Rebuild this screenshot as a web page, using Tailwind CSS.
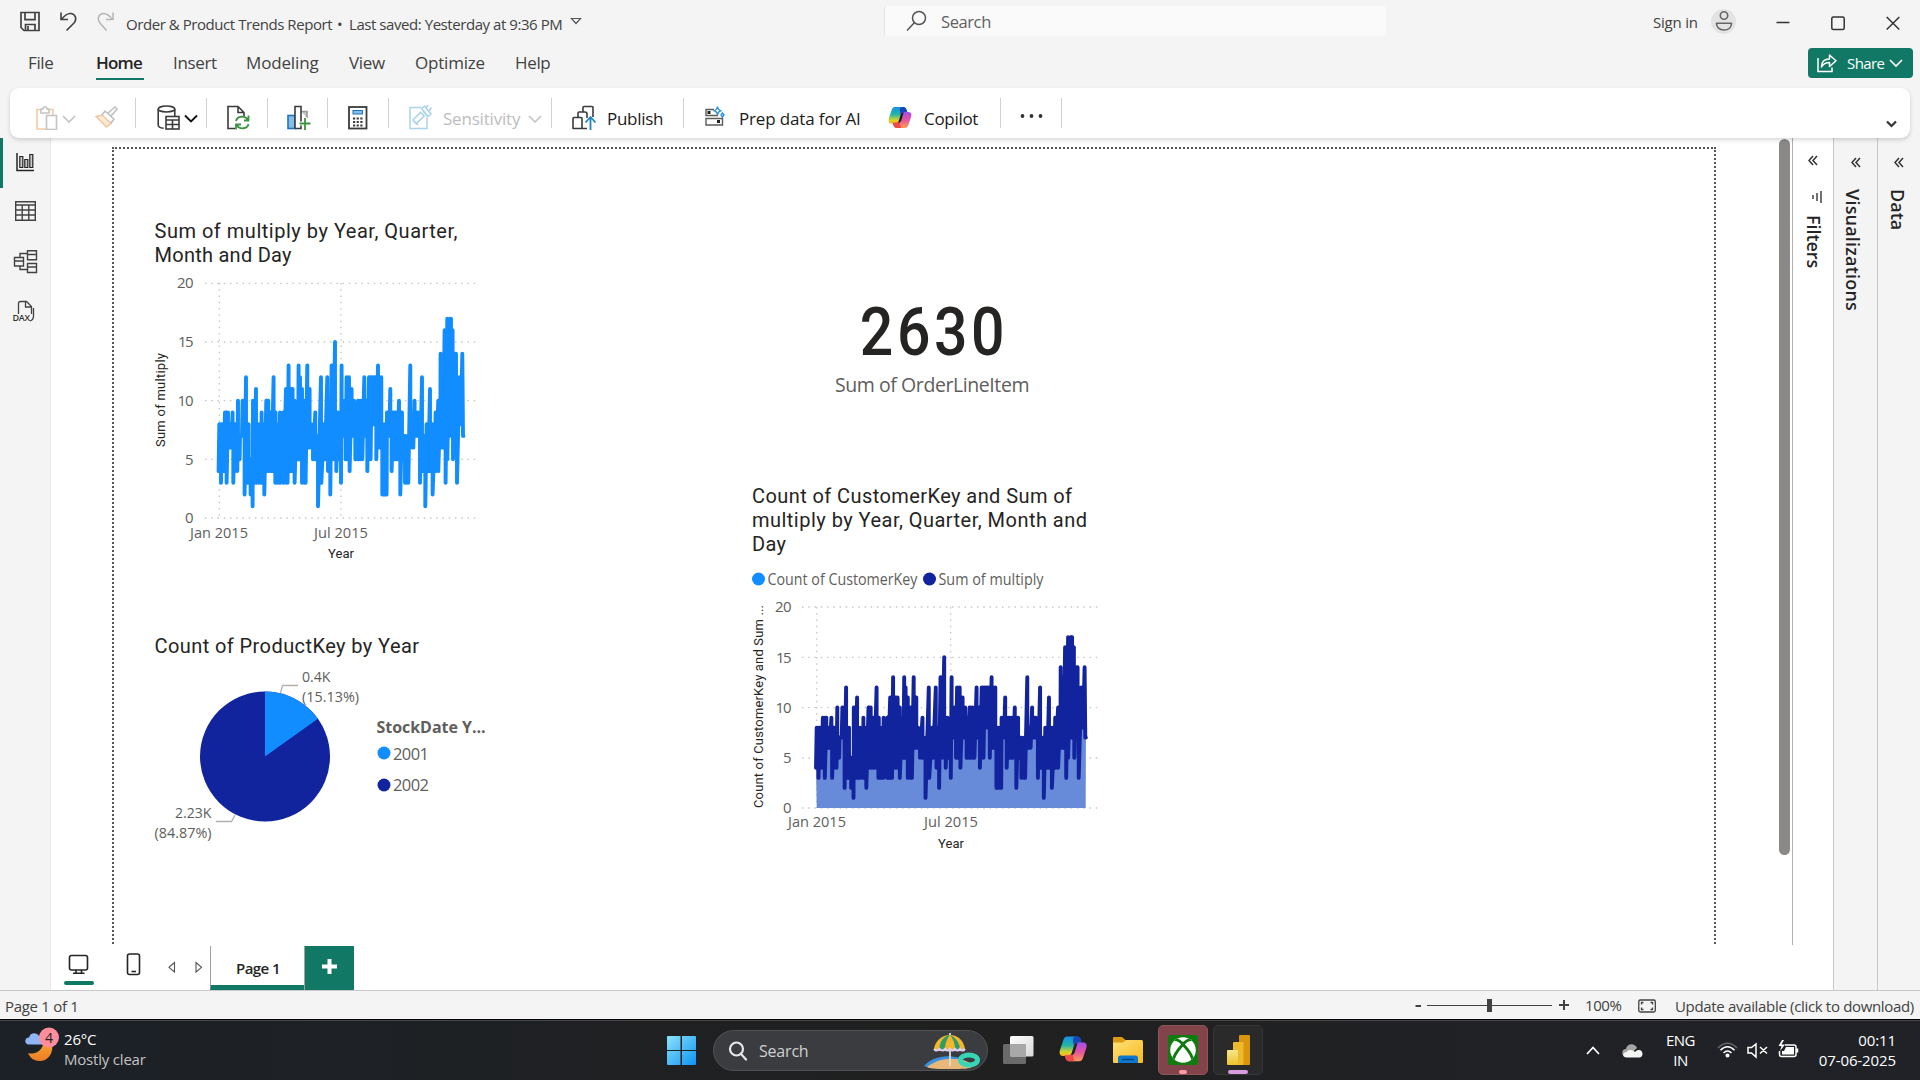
<!DOCTYPE html>
<html lang="en">
<head>
<meta charset="utf-8">
<title>Order &amp; Product Trends Report</title>
<script src="https://cdn.jsdelivr.net/npm/@tailwindcss/browser@4"></script>
</head>
<body class="w-[1920px] h-[1080px] overflow-hidden flex flex-col bg-[#f4f4f4] font-['Open_Sans','Noto_Sans',sans-serif] text-[#424242] whitespace-nowrap">

<!-- Title bar -->
<header class="h-[42px] shrink-0 flex items-start">
  <div class="w-[126px] h-[42px] pt-[11px] pl-[20px] flex">
    <svg class="w-[40px] h-[22px]" viewBox="0 0 40 22" fill="none" stroke="#424242" stroke-width="1.7"><path d="M1 1.5h18v18H4l-3-3z"/><path d="M5 1.5v7.2h10V1.5M5.5 19.500v-6h9.500v6M8 15v4"/></svg>
    <svg class="w-[37px] h-[22px]" viewBox="0 0 37 22" fill="none" stroke="#424242" stroke-width="1.6"><path d="M1 1.500v7h7M1.500 8.200C5 4 8 2 11 2.500c5 .8 6 6 3 9.500L6.500 19.500"/></svg>
    <svg class="w-[20px] h-[22px]" viewBox="0 0 20 22" fill="none" stroke="#b5b5b5" stroke-width="1.5"><path d="M16 1.500v7H9M15.500 8.200C12 4 9 2 6 2.500c-5 .8-6 6-3 9.500L9.500 19.500"/></svg>
  </div>
  <div class="w-[444px] pt-[14px] text-[15px] leading-[20px] tracking-[-0.44px] flex"><span class="w-[211px]">Order &amp; Product Trends Report</span><span class="w-[12px]">•</span><span>Last saved: Yesterday at 9:36 PM</span></div>
  <div class="w-[314px] pt-[17px]"><svg class="w-[12px] h-[9px]" viewBox="0 0 12 9" fill="none" stroke="#555" stroke-width="1.2"><path d="M1.500 1.500h9L6 6.500z"/></svg></div>
  <div class="w-[502px] h-[30px] mt-[6px] flex items-center pl-[21px] gap-[14px] bg-[#fafafa] border-l border-[#e2e2e2] rounded-[3px] text-[#616161] text-[16.500px] tracking-[-0.4px]">
    <svg class="w-[21px] h-[22px]" viewBox="0 0 21 22" fill="none" stroke="#555" stroke-width="1.5"><circle cx="13" cy="8" r="6.500"/><path d="M8.300 12.700L1 20.500"/></svg>
    <span class="pt-[2px]">Search</span>
  </div>
  <div class="w-[325px] pt-[12px] pl-[267px] text-[15px] leading-[20px] tracking-[-0.2px]">Sign in</div>
  <div class="w-[25px] h-[25px] mt-[9px] rounded-full bg-[#e3e3e3] flex justify-center">
    <svg class="w-[18px] h-[24px]" viewBox="0 0 18 24" fill="none" stroke="#666" stroke-width="1.600"><circle cx="9" cy="6.500" r="3.700"/><path d="M1.500 14.200h15c0 4-3 6.800-7.500 6.800S1.500 18.200 1.500 14.200z" stroke-linejoin="round"/></svg>
  </div>
  <div class="pt-[15px] pl-[40px] flex gap-[41px]">
    <svg class="w-[14px] h-[16px]" viewBox="0 0 14 16" stroke="#333" stroke-width="1.500"><path d="M.5 7.500h13"/></svg>
    <svg class="w-[14px] h-[16px]" viewBox="0 0 14 16" fill="none" stroke="#333" stroke-width="1.500"><rect x=".8" y="2" width="12.400" height="12.400" rx="1.500"/></svg>
    <svg class="w-[14px] h-[16px]" viewBox="0 0 14 16" stroke="#333" stroke-width="1.500"><path d="M.7 2l12.600 12.500M13.300 2L.7 14.500"/></svg>
  </div>
</header>

<!-- Ribbon tabs -->
<nav class="h-[46px] shrink-0 flex items-start text-[17px] leading-[24px] tracking-[-0.35px] pl-[28px]">
  <div class="w-[68px] pt-[9px]">File</div>
  <div class="w-[77px] pt-[9px] font-semibold text-[#242424]"><div class="w-[48px] h-[29px] border-b-2 border-[#117865] tracking-[-0.8px]">Home</div></div>
  <div class="w-[73px] pt-[9px]">Insert</div>
  <div class="w-[103px] pt-[9px] tracking-[-0.15px]">Modeling</div>
  <div class="w-[66px] pt-[9px]">View</div>
  <div class="w-[100px] pt-[9px] tracking-[-0.2px]">Optimize</div>
  <div class="w-[1293px] pt-[9px]">Help</div>
  <div class="w-[105px] h-[30px] mt-[6px] rounded-[4px] bg-[#117865] text-white flex items-center pl-[9px] text-[15px] tracking-[-0.6px]">
    <svg class="w-[30px] h-[20px]" viewBox="0 0 30 20" fill="none" stroke="#fff" stroke-width="1.500"><path d="M1 5v13.500h14v-4"/><path d="M4.500 14c0-5 3-8 8-8V2l6.500 5.800-6.500 5.700v-4c-3.500 0-6 1-8 4.500z" stroke-linejoin="round"/></svg>
    <span class="w-[42px]">Share</span>
    <svg class="w-[14px] h-[10px]" viewBox="0 0 14 10" fill="none" stroke="#fff" stroke-width="1.600"><path d="M1 2l6 6 6-6"/></svg>
  </div>
</nav>

<!-- Ribbon -->
<div class="h-[50px] shrink-0 ml-[10px] mr-[10px] z-10 bg-white rounded-[9px] shadow-[0_2px_4px_rgba(0,0,0,0.16)] flex items-start text-[17px] leading-[24px] tracking-[-0.3px] text-[#1b1b1b]">
  <div class="w-[125px] h-[40px] mt-[10px] pl-[26px] flex">
    <svg class="w-[59px] h-[32px]" viewBox="0 0 59 32" fill="none" stroke-width="1.600"><path d="M5 11.500H1V31h9M17 17v-5.500h-4" stroke="#f2cba5"/><path d="M5 11h2c0-3 4-3 4 0h2v4H5z" stroke="#c4c4c4"/><rect x="10.500" y="17.500" width="10" height="14" stroke="#c4c4c4"/><path d="M27 18l6 6 6-6" stroke="#c4c4c4"/></svg>
    <svg class="w-[24px] h-[32px]" viewBox="0 0 24 32" fill="none" stroke-width="1.500"><path d="M1 18.500l6-1.500 9 8.500-4.500 3.500z" fill="#fbe8d5" stroke="#f0c8a0"/><path d="M7 17l3-4 9 8-3 4M13 15l7-6 2 2-6 7" stroke="#bdbdbd"/></svg>
  </div>
  <div class="w-[71px] h-[30px] mt-[10px] border-l border-[#d1d1d1] pl-[21px]">
    <svg class="w-[42px] h-[32px]" viewBox="0 0 42 32" fill="none" stroke="#3b3b3b" stroke-width="1.600"><ellipse cx="9.500" cy="11" rx="8.300" ry="3"/><path d="M1.200 11v16c0 2 2 3 5.500 3.200M17.800 11v7"/><rect x="9" y="18.500" width="13" height="12.500" fill="#fff"/><path d="M9 22h13M9 26.500h13M15.500 22v9"/><path d="M28 17.500l6 6 6-6" stroke="#111" stroke-width="1.900"/></svg>
  </div>
  <div class="w-[61px] h-[30px] mt-[10px] border-l border-[#d1d1d1] pl-[20px]">
    <svg class="w-[24px] h-[32px]" viewBox="0 0 24 32" fill="none" stroke-width="1.600"><path d="M8 30.500H1v-22h10l6 6V18M11 8.500v6h6" stroke="#3b3b3b"/><path d="M9 23c1-5 9-6 12-1M21.500 17.500V22.500H17M21.500 26c-1 5-9 6-12 1M9 31.500V26.500h5" stroke="#3c9443" stroke-width="1.800"/></svg>
  </div>
  <div class="w-[60px] h-[30px] mt-[10px] border-l border-[#d1d1d1] pl-[19px]">
    <svg class="w-[24px] h-[32px]" viewBox="0 0 24 32" fill="none" stroke-width="1.600"><rect x="1" y="17.500" width="7" height="13" fill="#83beec" stroke="#1e74bb"/><path d="M14 13.500h6V20" stroke="#9a9a9a" fill="#c8c8c8"/><path d="M8 30.500v-22h6v22h-6" fill="#fff" stroke="#3b3b3b"/><path d="M18 19.500v12M12.500 25.500h11" stroke="#fff" stroke-width="4"/><path d="M18 20v12M12.500 25.500h11" stroke="#3c9443" stroke-width="1.800"/></svg>
  </div>
  <div class="w-[61px] h-[30px] mt-[10px] border-l border-[#d1d1d1] pl-[20px]">
    <svg class="w-[20px] h-[32px]" viewBox="0 0 20 32" fill="none"><rect x="1" y="9" width="17.500" height="21.500" fill="#fff" stroke="#3b3b3b" stroke-width="1.800"/><rect x="5" y="12.500" width="9.500" height="3.500" fill="#83beec" stroke="#1e74bb"/><path d="M5 20.500h9.500M5 24h9.500M5 27.500h9.500" stroke="#3b3b3b" stroke-width="2" stroke-dasharray="2.200 1.450"/></svg>
  </div>
  <div class="w-[163px] h-[30px] mt-[10px] border-l border-[#d1d1d1] pl-[20px] flex text-[#bdbdbd]">
    <svg class="w-[34px] h-[32px] shrink-0" viewBox="0 0 34 32" fill="none" stroke="#a9d3ec" stroke-width="1.500"><path d="M12 9.500H1v21h17v-11"/><rect x="-5.500" y="-2.500" width="11" height="5" transform="translate(9.500 20) rotate(-45)"/><path d="M5 23.500l4 3.500M14 13l5 6M12.500 10.500l3-2.500 6.500 8-3 2.500zM17 10l2-3M20 13l2.500-3.500"/></svg>
    <span class="w-[86px] pt-[9px] tracking-[-0.2px]">Sensitivity</span>
    <svg class="w-[14px] h-[32px] -ml-px" viewBox="0 0 14 32" fill="none" stroke="#c0c0c0" stroke-width="1.500"><path d="M1 18l6 6 6-6"/></svg>
  </div>
  <div class="w-[132px] h-[30px] mt-[10px] border-l border-[#d1d1d1] pl-[20px] flex">
    <svg class="w-[35px] h-[32px]" viewBox="0 0 35 32" fill="none" stroke="#3b3b3b" stroke-width="1.600" stroke-linejoin="round"><path d="M11 14V9.500q0-1 1-1h8q1 0 1 1V19M6 19v-4q0-1 1-1h6q2 0 2 2v4"/><path d="M1 20.500q0-1 1-1h7q1 0 1 1v10H1zM10 30.500h5"/><path d="M18.500 32V19.500M13.500 24.500l5-5.500 5 5.500" stroke="#1e83c8" stroke-width="1.800"/></svg>
    <span class="pt-[9px]">Publish</span>
  </div>
  <div class="w-[317px] h-[30px] mt-[10px] border-l border-[#d1d1d1] pl-[21px] flex">
    <svg class="w-[34px] h-[32px]" viewBox="0 0 34 32" fill="none" stroke="#5b5b5b" stroke-width="1.400"><path d="M9 11.500H1v6h12M1 20.500h16.500v6.500H1z"/><path d="M2.500 14.500h3M12 23.500h3" stroke="#222" stroke-width="2.800"/><path d="M12.500 8.500q.7 4 4 4.300-3.300.3-4 4.200-.7-4-4-4.200 3.300-.3 4-4.300zM17.500 15l1.500 2-1.500 2-1.500-2z" stroke="#2b95d6"/></svg>
    <span class="w-[149px] pt-[9px] tracking-[-0.15px]">Prep data for AI</span>
    <svg class="w-[36px] h-[32px]" viewBox="0 -8.500 36 32"><use href="#copilot"/></svg>
    <span class="pt-[9px]">Copilot</span>
  </div>
  <div class="w-[61px] h-[30px] mt-[10px] border-l border-[#d1d1d1] pl-[19px] flex items-center">
    <svg class="w-[24px] h-[10px]" viewBox="0 0 24 10" fill="#333"><circle cx="2.500" cy="8" r="1.900"/><circle cx="11.500" cy="8" r="1.900"/><circle cx="20.500" cy="8" r="1.900"/></svg>
  </div>
  <div class="w-[824px] h-[30px] mt-[10px] border-l border-[#d1d1d1]"></div>
  <svg class="w-[13px] h-[10px] mt-[31px]" viewBox="0 0 13 10" fill="none" stroke="#333" stroke-width="2.200"><path d="M2 2.500l4.500 4.500L11 2.500"/></svg>
</div>

<svg class="absolute w-0 h-0" aria-hidden="true">
  <defs>
    <linearGradient id="cpA" x1="0" y1="0" x2="0" y2="1"><stop offset="0" stop-color="#1590e8"/><stop offset=".45" stop-color="#22b5a5"/><stop offset=".8" stop-color="#d9d52a"/><stop offset="1" stop-color="#f6b21c"/></linearGradient>
    <linearGradient id="cpB" x1="0" y1="0" x2="0" y2="1"><stop offset="0" stop-color="#a04ff0"/><stop offset=".5" stop-color="#e4559c"/><stop offset="1" stop-color="#ff9a55"/></linearGradient>
  </defs>
  <symbol id="copilot" viewBox="0 0 24 22" width="24" height="22" overflow="visible">
    <path d="M7 .5h8c2 0 3 1.500 3.500 3l.6 2.200h-2.600c-2 0-3 .8-3.600 2.800l-2 6.500c-.5 1.700-1.400 2-3 2H4C1 17 0 15 .8 12L3.500 4C4.200 1.700 5 .5 7 .5z" fill="url(#cpA)"/>
    <path d="M13 .5h2.500c2 0 2.700 1.500 3.200 3l.6 2.200h-3c-2 0-3 .8-3.600 2.500C12 5 11 3 13 .5z" fill="#1746b8"/>
    <path d="M17 21.500H9c-2 0-3-1.500-3.500-3L5 16.300h2.600c2 0 3-.8 3.600-2.800l2-6.500c.5-1.200 1.400-1.500 3-1.500H20c3 0 4 1.500 3.200 4.500l-2.700 8c-.7 2.300-1.500 3.500-3.500 3.500z" fill="url(#cpB)"/>
    <path d="M10 21.500H8.500c-2 0-2.700-1.500-3.200-3L4.700 16.300h3c2 0 3-.8 3.600-2.500l1.700 7.700z" fill="#ee4a4a"/>
    <path d="M10.200 16.200L12.800 8q.8-2.300 3-2.400L13.300 14q-.8 2.200-3.100 2.200z" fill="currentColor"/>
  </symbol>
</svg>

<!-- Workspace -->
<main class="h-[852px] shrink-0 flex">
  <aside class="w-[51px] border-r border-[#e8e8e8] flex">
    <div class="w-[3px] h-[50px] bg-[#117865]"></div>
    <div class="pl-[9px] pt-[14px] flex flex-col">
      <svg class="w-[26px] h-[49px]" viewBox="0 0 26 49" fill="none" stroke="#242424" stroke-width="1.500"><path d="M5 1v17.500h17"/><path d="M7.800 4.500h3v11h-3zM12.800 7.500h3v8h-3zM17.800 2.500h3v13h-3z" fill="#ccc" stroke-width="1.200"/></svg>
      <svg class="w-[26px] h-[49px]" viewBox="0 0 26 49" fill="none" stroke="#424242" stroke-width="1.400"><path d="M3.700.8h19.600v18.400H3.700zM3.700 4h19.600M3.700 9h19.600M3.700 14h19.600M10.200 4v15M16.800 4v15"/></svg>
      <svg class="w-[26px] h-[51px]" viewBox="0 0 26 51" fill="none" stroke="#424242" stroke-width="1.400"><path d="M15.500.8h9v9h-9zM15.500 4.500h9M15.500 13.500h9v9h-9zM15.500 17h9M2.500 7.500h9v8.500h-9zM2.500 11h9M8 7.500V3.500h7.500M8 16v3.500h7.500"/></svg>
      <svg class="w-[26px] h-[26px] overflow-visible" viewBox="0 0 26 26" fill="none" stroke="#424242" stroke-width="1.300"><path d="M6.500 13V2.500q0-2 2-2h6l5 5V13M13.500.5V6h5.500M21.500 7v8q0 4-3.500 5"/><text x="0.500" y="20.300" font-size="9" font-weight="600" fill="#333" stroke="none" textLength="17.500">DAX</text></svg>
    </div>
  </aside>

  <section class="w-[1741px] bg-white flex flex-col">
    <div class="h-[807px] relative overflow-hidden">
      <div class="absolute left-[61px] top-[9px] w-[1604px] h-[900px] border-2 border-dotted border-[#555]"></div>
      <div class="absolute left-[1728px] top-[1px] w-[11px] h-[716px] rounded-full bg-[#8a8987]"></div>

      <!-- Line chart -->
      <svg class="absolute left-[89px] top-[72px] w-[360px] h-[360px]" viewBox="0 0 360 360" font-size="15.500" fill="#605e5c">
        <g font-family="Roboto" font-size="20" fill="#252423"><text x="14.500" y="28" textLength="303">Sum of multiply by Year, Quarter,</text><text x="14.500" y="52" textLength="137">Month and Day</text></g>
        <g stroke="#c8c6c4" stroke-width="1.300" stroke-dasharray="1.500 4.750"><path d="M65 73.300h271M65 132h271M65 190.700h271M65 249.300h271M65 308h271M79.300 73v235M201 73v235"/></g>
        <g text-anchor="end" font-size="15"><text x="53.500" y="78" textLength="16.500">20</text><text x="53.500" y="137" textLength="15.500">15</text><text x="53.500" y="195.500" textLength="16">10</text><text x="53.500" y="254.500">5</text><text x="53.500" y="313">0</text></g>
        <g font-size="15"><text x="50" y="328" textLength="58" lengthAdjust="spacingAndGlyphs">Jan 2015</text><text x="174" y="328" textLength="54" lengthAdjust="spacingAndGlyphs">Jul 2015</text></g>
        <g font-family="Roboto" font-size="13" fill="#252423"><text x="188" y="348" textLength="26">Year</text><text transform="translate(25 237) rotate(-90)" textLength="94">Sum of multiply</text></g>
        <path id="line1" fill="none" stroke="#118dff" stroke-width="3.900" stroke-linejoin="round" stroke-linecap="round"/>
      </svg>

      <!-- Card -->
      <div class="absolute left-[784px] top-[150px] w-[194px] flex flex-col items-center">
        <div class="font-[Roboto] font-medium text-[67px] leading-[88px] tracking-[4px] pl-[4px] scale-x-[0.88] text-[#252423]">2630</div>
        <div class="text-[19.500px] leading-[26px] -mt-[4px] tracking-[-0.42px] text-[#605e5c]">Sum of OrderLineItem</div>
      </div>

      <!-- Pie chart -->
      <svg class="absolute left-[89px] top-[482px] w-[360px] h-[230px]" viewBox="0 0 360 230" font-size="15" fill="#605e5c">
        <text x="14.500" y="33" font-family="Roboto" font-size="20" fill="#252423" textLength="264.500">Count of ProductKey by Year</text>
        <circle cx="125" cy="136.500" r="65" fill="#12239e"/>
        <path d="M125 136.500V71.500A65 65 0 0 1 177.900 98.700z" fill="#118dff"/>
        <path d="M140.500 73l2-7.500H158M76 201.500h15.500l3.500-6.500" fill="none" stroke="#b3b0ad" stroke-width="1.300"/>
        <text x="162" y="62" textLength="28.500" lengthAdjust="spacingAndGlyphs">0.4K</text><text x="162" y="82" textLength="57" lengthAdjust="spacingAndGlyphs">(15.13%)</text>
        <text x="35" y="198" textLength="36.500" lengthAdjust="spacingAndGlyphs">2.23K</text><text x="14.500" y="218" textLength="57" lengthAdjust="spacingAndGlyphs">(84.87%)</text>
        <text x="236.500" y="113" font-size="16" font-weight="700" textLength="109">StockDate Y...</text>
        <circle cx="244" cy="133" r="6.500" fill="#118dff"/><circle cx="244" cy="165" r="6.500" fill="#12239e"/>
        <g font-size="16.500"><text x="253" y="140" textLength="36">2001</text><text x="253" y="171" textLength="36">2002</text></g>
      </svg>

      <!-- Area chart -->
      <svg class="absolute left-[689px] top-[332px] w-[370px] h-[390px]" viewBox="0 0 370 390" font-size="15.500" fill="#605e5c">
        <g font-family="Roboto" font-size="20" fill="#252423"><text x="12" y="33" textLength="320">Count of CustomerKey and Sum of</text><text x="12" y="57" textLength="335">multiply by Year, Quarter, Month and</text><text x="12" y="81" textLength="34">Day</text></g>
        <circle cx="18.500" cy="109" r="6.500" fill="#118dff"/><text x="27.500" y="115" textLength="150" lengthAdjust="spacingAndGlyphs">Count of CustomerKey</text>
        <circle cx="189.500" cy="109" r="6.500" fill="#12239e"/><text x="198.500" y="115" textLength="105" lengthAdjust="spacingAndGlyphs">Sum of multiply</text>
        <g text-anchor="end" font-size="15"><text x="51.500" y="142" textLength="16.500">20</text><text x="51.500" y="192.500" textLength="15.500">15</text><text x="51.500" y="242.500" textLength="16">10</text><text x="51.500" y="293">5</text><text x="51.500" y="343">0</text></g>
        <g font-size="15"><text x="48" y="357" textLength="58" lengthAdjust="spacingAndGlyphs">Jan 2015</text><text x="184" y="357" textLength="54" lengthAdjust="spacingAndGlyphs">Jul 2015</text></g>
        <g font-family="Roboto" font-size="13" fill="#252423"><text x="198" y="378" textLength="26">Year</text><text transform="translate(23 338) rotate(-90)" textLength="203">Count of CustomerKey and Sum ...</text></g>
        <path id="area2" fill="#678bd9"/>
        <g stroke="#8a8fa8" stroke-opacity=".5" stroke-width="1.300" stroke-dasharray="1.500 4.750"><path d="M62 137h297M62 187.300h297M62 237.700h297M62 288h297M62 338h297M76.700 137v201M210.700 137v201"/></g>
        <path id="line2" fill="none" stroke="#12239e" stroke-width="3.900" stroke-linejoin="round" stroke-linecap="round"/>
      </svg>
    </div>

    <!-- Page tabs -->
    <div class="h-[45px] flex items-start">
      <div class="w-[159px] pl-[13px] flex">
        <div class="w-[61px]"><svg class="w-[30px] h-[41px]" viewBox="0 0 30 41" fill="none" stroke="#242424" stroke-width="1.600"><rect x="5.500" y="10.500" width="18" height="14.500" rx="2"/><path d="M12 25v3M17.500 25v3M9 28.300h11.500"/><rect x="0" y="36" width="30" height="4" rx="2" fill="#117865" stroke="none"/></svg></div>
        <svg class="w-[42px] h-[41px]" viewBox="0 0 42 41" fill="none" stroke="#242424" stroke-width="1.600"><rect x="2.500" y="9" width="12" height="20.500" rx="2"/><path d="M6.500 26.500h4.500"/></svg>
        <svg class="w-[40px] h-[41px]" viewBox="0 0 40 41" fill="none" stroke="#555" stroke-width="1.100"><path d="M7.500 17.500v9.500l-5.500-4.700zM29 17.500v9.500l5.500-4.700z"/></svg>
      </div>
      <div class="w-[94px] h-[45px] mt-px border-l border-[#a0a0a0] border-b-6 border-b-[#117865] text-[15px] leading-[44px] font-semibold tracking-[-0.6px] text-center pl-[1px] text-[#242424]">Page 1</div>
      <div class="w-[50px] h-[45px] mt-px border-l border-[#a0a0a0] bg-[#117865] flex justify-center pt-[13px]"><svg class="w-[15px] h-[15px]" viewBox="0 0 15 15" stroke="#fff" stroke-width="4"><path d="M7.500 0v15M0 7.500h15"/></svg></div>
    </div>
  </section>

  <aside class="w-[42px] bg-white border-r border-[#c8c8c8]">
    <div class="h-[807px] border-l border-[#b0b0b0] flex flex-col pt-[17px] pl-[12px]">
      <svg class="w-[14px] h-[12px] ml-[3px]" viewBox="0 0 14 12" fill="none" stroke="#333" stroke-width="1.500"><path d="M5 1L1 5.500 5 10M9 1L5 5.500 9 10"/></svg>
      <svg class="w-[14px] h-[14px] mt-[23px] ml-[4px]" viewBox="0 0 14 14" stroke="#444" stroke-width="1.500"><path d="M12 1v12M8 3v8M4 5v4"/></svg>
      <div class="[writing-mode:vertical-rl] mt-[11px] w-[18px] leading-[18px] text-[18px] font-semibold tracking-[-0.05px] text-[#242424]">Filters</div>
    </div>
  </aside>
  <aside class="w-[44px] border-r border-[#c8c8c8] pl-[10px] pt-[19px] flex flex-col">
    <svg class="w-[14px] h-[12px] ml-[7px]" viewBox="0 0 14 12" fill="none" stroke="#333" stroke-width="1.500"><path d="M5 1L1 5.500 5 10M9 1L5 5.500 9 10"/></svg>
    <div class="[writing-mode:vertical-rl] mt-[20px] w-[18px] leading-[18px] text-[18px] font-semibold tracking-[0.200px] text-[#242424]">Visualizations</div>
  </aside>
  <aside class="w-[41px] pl-[11px] pt-[19px] flex flex-col">
    <svg class="w-[14px] h-[12px] ml-[5px]" viewBox="0 0 14 12" fill="none" stroke="#333" stroke-width="1.500"><path d="M5 1L1 5.500 5 10M9 1L5 5.500 9 10"/></svg>
    <div class="[writing-mode:vertical-rl] mt-[20px] w-[18px] leading-[18px] text-[18px] font-semibold text-[#242424]">Data</div>
  </aside>
</main>

<!-- Status bar -->
<footer class="h-[29px] shrink-0 border-t border-[#c8c8c8] flex items-start text-[15px] leading-[20px] tracking-[-0.4px]">
  <div class="w-[1410px] pl-[5px] pt-[5px] tracking-[-0.3px]">Page 1 of 1</div>
  <svg class="w-[175px] h-[28px]" viewBox="0 0 175 28" stroke="#424242"><path d="M5.500 15h5.500M149 14h10M154 9v10" stroke-width="2"/><path d="M17 14.500h125" stroke-width="1.200"/><path d="M79.500 8v13" stroke-width="5"/></svg>
  <div class="w-[53px] pt-[4px]">100%</div>
  <svg class="w-[37px] h-[28px]" viewBox="0 0 37 28" fill="none" stroke="#424242" stroke-width="1.300"><rect x=".8" y="9" width="16.500" height="12" rx="1.500"/><path d="M3.500 13.500v-2h2M12.500 11.500h2v2M14.500 16.500v2h-2M5.500 18.500h-2v-2"/></svg>
  <div class="pt-[5px] tracking-[-0.33px]">Update available (click to download)</div>
</footer>

<!-- Taskbar -->
<div class="h-[61px] shrink-0 bg-linear-to-r from-[#1c2127] via-[#202020] to-[#202228] border-t border-black shadow-[inset_0_1px_0_#484848] flex items-start text-white text-[15px] leading-[20px]">
  <div class="w-[64px] pl-[24px] pt-[7px]">
    <svg class="w-[38px] h-[38px]" viewBox="0 0 38 38"><defs><linearGradient id="moon" x1="0" y1="0" x2="0" y2="1"><stop offset="0" stop-color="#f7b03a"/><stop offset="1" stop-color="#ee7d22"/></linearGradient></defs><path d="M24 9c8 7 5 25-8 25-6 0-10-3-12-8 9 3 18-6 15-15z" fill="url(#moon)"/><path d="M5 17.500c-5 0-5-7 0-7C6 5 13 5 15 9c6-1 7 8 3 8.500z" fill="#8fb5f5"/><circle cx="25" cy="10.500" r="10" fill="#ff8d9b"/><text x="25" y="16" text-anchor="middle" font-size="14" fill="#222">4</text></svg>
  </div>
  <div class="w-[603px] pt-[9px] tracking-[-0.2px]"><div>26°C</div><div class="text-[#c4c4c4]">Mostly clear</div></div>
  <svg class="w-[46px] h-[29px] mt-[16px]" viewBox="0 0 46 29"><defs><linearGradient id="win" x1="0" y1="0" x2="1" y2="1"><stop offset="0" stop-color="#8be3fb"/><stop offset="1" stop-color="#0d93f3"/></linearGradient></defs><path d="M0 1q0-1 1-1h12.500v14H0zM15 0h13q1 0 1 1v13H15zM0 15h13.500v14H1q-1 0-1-1zM15 15h14v13q0 1-1 1H15z" fill="url(#win)"/></svg>
  <div class="w-[275px] h-[41px] mt-[10px] rounded-full bg-[#3b3c3f] border border-[#515254] flex items-center pl-[14px] text-[#d0d0d0] text-[16px] tracking-[-0.2px]">
    <svg class="w-[31px] h-[20px]" viewBox="0 0 31 20" fill="none" stroke="#e6e6e6" stroke-width="2.200"><circle cx="8.500" cy="8" r="6.500"/><path d="M13 13l5 5.500" stroke-linecap="round"/></svg>
    <span class="w-[165px]">Search</span>
    <svg class="w-[58px] h-[40px]" viewBox="0 -1 58 40"><path d="M0 34c8-9 22-12 36-8l6 5-36 5z" fill="#3d8fe0"/><path d="M3 35c10-8 22-10 36-7 6 2 9 4 10 6-2 3-10 3-24 3-10 0-18 0-22-2z" fill="#e9b878"/><path d="M26 1v33" stroke="#ddd" stroke-width="1.800"/><path d="M10 17c1-8 8-14 16-14s14 6 15 14q-2.500 3-5 0-2.500 3-5 0-2.500 3-5 0-2.500 3-5 0-2.500 3-5.500 0-3 3-5.500 0z" fill="#f5b52d"/><path d="M15.500 16C16 9 20 4 26 3c-3 4-5 8-5 14-2 2-4 2-5.500-1zM26 3c5 2 9 7 10 13-1 3-4 3-5 1 0-6-2-10-5-14z" fill="#2f9c68"/><path d="M10 17q2.500 3 5.500 0 3 3 5.500 0 2.500 3 5 0 2.500 3 5 0 2.500 3 5 0 2.500 3 5 0" fill="none" stroke="#dcd0ef" stroke-width="2.200"/><ellipse cx="45" cy="28" rx="8.500" ry="5" fill="none" stroke="#35d5b5" stroke-width="5"/></svg>
  </div>
  <svg class="w-[56px] h-[30px] mt-[16px] ml-[15px]" viewBox="0 0 56 30"><defs><linearGradient id="tv" x1="0" y1="0" x2="1" y2="1"><stop offset="0" stop-color="#fff"/><stop offset="1" stop-color="#d8d8d8"/></linearGradient></defs><rect x="0" y="8" width="23" height="20" rx="1.500" fill="#6a6a6a"/><rect x="7" y="0" width="23.500" height="20.500" rx="1.500" fill="url(#tv)"/><path d="M7 8h15q1 0 1 1v11.500H8.500Q7 20.500 7 19z" fill="#a8a8a8"/></svg>
  <svg class="w-[39px] h-[32px] mt-[16px] text-[#202224]" viewBox="0 0 39 32"><g transform="scale(1.180 1.180)"><use href="#copilot"/></g></svg>
  <svg class="w-[45px] h-[28px] mt-[16px] ml-[15px]" viewBox="0 0 45 28"><defs><linearGradient id="fold" x1="0" y1="0" x2="1" y2="1"><stop offset="0" stop-color="#ffe27a"/><stop offset="1" stop-color="#f9b81f"/></linearGradient></defs><path d="M0 2q0-1 1-1h8l4 3.500H29V10H0z" fill="#dc9c10"/><path d="M0 6.500h10L13 4h15.500q1.500 0 1.500 1.500V26q0 1-1 1H1q-1 0-1-1z" fill="url(#fold)"/><path d="M5 27v-5q0-2.500 2.500-2.500h15Q25 19.500 25 22v5z" fill="#0c79cf"/><path d="M9 23.500h12" stroke="#07497f" stroke-width="1.500"/></svg>
  <div class="w-[50px] h-[50px] mt-[5px] rounded-[5px] bg-[#80444a] border border-[#8d555a] flex flex-col items-center pt-[9px]">
    <svg class="w-[30px] h-[30px] shrink-0" viewBox="0 0 30 30"><defs><clipPath id="ball"><circle cx="15" cy="15" r="12.800"/></clipPath></defs><rect width="30" height="30" rx="2" fill="#107c10"/><circle cx="15" cy="15" r="12.800" fill="#fff"/><g clip-path="url(#ball)"><path d="M6 4.500Q11 4 16 10.500 24 19 25.500 27" fill="none" stroke="#107c10" stroke-width="3"/><path d="M24 4.500Q19 4 14 10.500 6 19 4.500 27" fill="none" stroke="#107c10" stroke-width="3"/></g></svg>
    <div class="w-[8px] h-[4px] mt-[5px] rounded-full bg-[#ff9aa5] shrink-0"></div>
  </div>
  <div class="w-[50px] h-[50px] mt-[5px] ml-[5px] rounded-[5px] bg-[#2a2a2b] border border-[#363637] flex flex-col items-center pt-[9px]">
    <svg class="w-[23px] h-[30px] shrink-0" viewBox="0 0 23 30"><defs><linearGradient id="pb" x1="0" y1="0" x2="0" y2="1"><stop offset="0" stop-color="#f9e589"/><stop offset="1" stop-color="#edc32d"/></linearGradient></defs><rect x="12" y="0" width="11" height="30" rx="1" fill="#d9950c"/><rect x="6" y="7" width="10.500" height="23" rx="1" fill="#efb92c"/><rect x="0" y="15" width="11" height="15" rx="1" fill="url(#pb)"/></svg>
    <div class="w-[20px] h-[4px] mt-[5px] rounded-full bg-[#d79be0] shrink-0"></div>
  </div>
  <div class="w-[402px] pt-[24px] pl-[323px] flex">
    <svg class="w-[36px] h-[14px] shrink-0" viewBox="0 0 36 14" fill="none" stroke="#fff" stroke-width="1.800"><path d="M1 10l6-6.500 6 6.500"/></svg>
    <svg class="w-[22px] h-[14px] shrink-0" viewBox="0 0 22 14"><path d="M3 12.500C-1 11-.5 5 4 5 5-1 13-1 15 4l-9 8.500z" fill="#a5a5a5"/><path d="M5 13.500c-5 0-5-5-.500-5.500C7 5 11 6 13 8c4-4 8-1 7.500 2.500-.5 2-1.500 3-3 3z" fill="#f4f4f4"/></svg>
  </div>
  <div class="w-[31px] pt-[10px] flex flex-col items-center tracking-[-0.5px]"><div>ENG</div><div>IN</div></div>
  <svg class="w-[84px] h-[20px] mt-[20px] ml-[21px]" viewBox="0 0 84 20" fill="none" stroke="#fff" stroke-width="1.500"><path d="M1 8Q10.500-1.500 20 8" stroke="#666"/><path d="M3.500 10.300q7-7 14 0M6.500 13q4-4 8 0"/><circle cx="10.500" cy="15.500" r="1.300" fill="#fff"/><path d="M31 7.500h3.500L39 4v13l-4.500-4H31zM43 7l7 6.500M50 7l-7 6.500"/><path d="M68 5h9q2 0 2 2v7.500q0 2-2 2H64.500q-2 0-2-2V11M80.500 8.500v4"/><path d="M69 7h8v7.500H65V11h2z" fill="#fff" stroke="none"/><path d="M65 0l-3.500 6h3L63 11l5-6.500h-3.500L67 0z" fill="#fff" stroke="none"/></svg>
  <div class="w-[95px] pt-[10px] text-right tracking-[-0.1px]"><div>00:11</div><div>07-06-2025</div></div>
</div>

<script>
const highs = [[236,4],[238,8],[246,8],[250,8],[255,9],[264,9],[270,8],[278,9],[284,8],[294,10],[300,7],[308,10],[313,10],[318,12],[326,8],[332,5],[339,10],[348,11],[356,8],[365,9],[370,8],[379,10],[385,10],[392,9],[401,12],[407,9],[412,8],[420,9],[430,9],[438,11],[446,13],[451,11],[458,11],[464,10],[470,9],[476,13],[480,12],[486,11],[494,10],[502,13],[509,11],[514,8],[519,7],[526,9],[534,7],[543,12],[552,8],[562,12],[568,8],[575,13],[580,13],[585,15],[594,9],[600,8],[605,13],[614,10],[620,12],[627,12],[635,11],[642,10],[648,9],[654,10],[662,10],[667,9],[673,12],[680,10],[687,12],[695,12],[704,12],[714,13],[724,12],[733,8],[741,9],[751,11],[759,9],[768,9],[777,10],[786,9],[792,7],[802,7],[811,13],[817,8],[824,10],[834,9],[840,8],[846,12],[853,7],[860,8],[870,11],[878,8],[887,9],[895,10],[902,14],[908,13],[914,16],[922,17],[933,17],[938,16],[948,14],[958,12],[967,14]];
const lows = [[236,4],[243,3],[250,4],[260,3],[268,6],[274,6],[280,3],[285,4],[292,4],[299,5],[306,7],[314,2],[322,3],[332,2],[338,1],[343,3],[350,3],[364,3],[373,2],[380,4],[395,4],[406,3],[418,3],[431,3],[443,3],[453,4],[464,3],[474,5],[486,3],[497,3],[508,6],[519,5],[527,5],[534,1],[544,3],[555,5],[564,4],[571,2],[580,5],[589,4],[597,5],[603,3],[610,7],[617,5],[629,4],[638,7],[646,5],[656,5],[667,5],[675,7],[682,4],[692,5],[700,8],[709,5],[718,6],[727,2],[740,2],[748,7],[755,4],[763,5],[772,5],[781,2],[788,5],[795,3],[805,3],[811,6],[820,6],[830,7],[840,3],[848,4],[856,1],[865,4],[872,4],[878,2],[885,4],[895,4],[901,6],[910,6],[917,3],[922,5],[930,7],[939,5],[945,8],[951,3],[958,8],[963,8],[970,7]];
function at(list, x, pick) {
  const i = list.findIndex(p => p[0] >= x);
  if (i < 0) return list[list.length - 1][1];
  if (list[i][0] === x || i === 0) return list[i][1];
  return pick(list[i][1], list[i - 1][1]);
}
const xs = [...new Set([...highs, ...lows].map(p => p[0]))].sort((a, b) => a - b);
const series = xs.filter(x => x < 969).flatMap(x => {
  const t = at(highs, x, Math.min), b = at(lows, x, Math.max);
  return [[x, Math.max(t, b)], [x, b]];
}).concat([[967, 14], [969, 7], [970.5, 7]]);
function path(x0, xk, y0, unit) {
  return 'M' + series.map(([x, v]) => (x0 + (x - 238) / 3 * xk).toFixed(1) + ' ' + (y0 - v * unit).toFixed(1)).join('L');
}
document.getElementById('line1').setAttribute('d', path(79.3, 1, 308, 11.73));
const p2 = path(76.7, 1.1025, 338, 10.05);
document.getElementById('line2').setAttribute('d', p2);
document.getElementById('area2').setAttribute('d', p2 + 'L345.700 338L76.700 338Z');
</script>
</body>
</html>
